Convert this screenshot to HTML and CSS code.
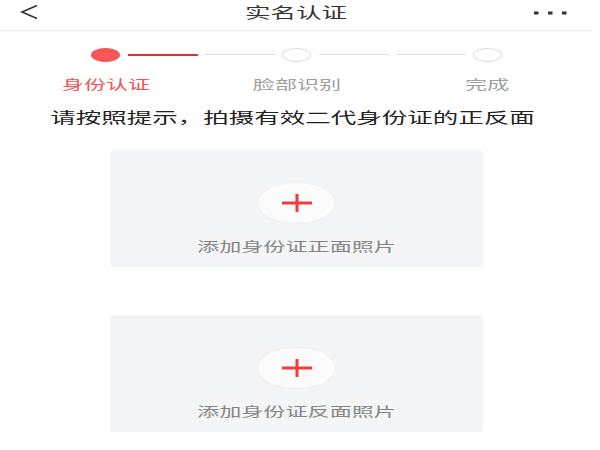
FILE: index.html
```html
<!DOCTYPE html>
<html lang="zh-CN">
<head>
<meta charset="utf-8">
<title>实名认证</title>
<link rel="stylesheet" href="styles.css">
</head>
<body>
<div class="page">
  <header class="topbar">
    <svg class="back" width="18" height="16" viewBox="0 0 18 16"><polyline points="17,1.5 2,8 17,14.5" fill="none" stroke="#333" stroke-width="1.6"/></svg>
    <h1 class="title"><span class="sx">实名认证</span></h1>
    <svg class="more" width="33" height="4" viewBox="0 0 33 4"><rect x="0" y="0.5" width="4.5" height="3" fill="#333"/><rect x="14" y="0.5" width="4.5" height="3" fill="#333"/><rect x="28" y="0.5" width="4.5" height="3" fill="#333"/></svg>
  </header>

  <div class="stepper">
    <div class="step active">
      <div class="dot"></div>
      <div class="step-label"><span class="sx">身份认证</span></div>
    </div>
    <div class="connector"><i class="seg red"></i><i class="seg"></i></div>
    <div class="step">
      <div class="dot"></div>
      <div class="step-label"><span class="sx">脸部识别</span></div>
    </div>
    <div class="connector"><i class="seg"></i><i class="seg"></i></div>
    <div class="step">
      <div class="dot"></div>
      <div class="step-label"><span class="sx">完成</span></div>
    </div>
  </div>

  <p class="hint"><span class="sx">请按照提示，拍摄有效二代身份证的正反面</span></p>

  <div class="card">
    <div class="add">
      <svg width="30" height="18" viewBox="0 0 30 18"><rect x="0" y="7.5" width="30" height="3" fill="#f23b3b"/><rect x="13.5" y="0" width="3" height="18" fill="#f23b3b"/></svg>
    </div>
    <div class="card-label"><span class="sx">添加身份证正面照片</span></div>
  </div>

  <div class="card">
    <div class="add">
      <svg width="30" height="18" viewBox="0 0 30 18"><rect x="0" y="7.5" width="30" height="3" fill="#f23b3b"/><rect x="13.5" y="0" width="3" height="18" fill="#f23b3b"/></svg>
    </div>
    <div class="card-label"><span class="sx">添加身份证反面照片</span></div>
  </div>
</div>
</body>
</html>
```

FILE: styles.css
```css
html, body {
  margin: 0;
  padding: 0;
  background: #fff;
}
body {
  font-family: "Noto Sans CJK SC", "Noto Sans", sans-serif;
}
.page {
  width: 593px;
}
.sx {
  display: inline-block;
  transform: scaleX(1.7);
  white-space: nowrap;
}

.topbar {
  height: 30px;
  border-bottom: 1px solid #ebebeb;
  display: grid;
  grid-template-columns: 1fr auto 1fr;
  align-items: center;
  padding: 0 26px 0 20px;
}
.back {
  display: block;
  margin-top: -6px;
}
.more {
  display: block;
  justify-self: end;
  margin-top: -5px;
}
.title {
  margin: -7px 0 0 0;
  padding-left: 5px;
  font-size: 15px;
  font-weight: 400;
  line-height: 21px;
  color: #333;
}

.stepper {
  display: flex;
  align-items: flex-start;
  padding: 17px 91px 0 91px;
}
.step {
  width: 29px;
  display: flex;
  flex-direction: column;
  align-items: center;
  flex: none;
}
.dot {
  width: 27px;
  height: 12px;
  border: 1px solid #dedede;
  border-radius: 50%;
  background: #fff;
}
.step.active .dot {
  background: #f65656;
  border-color: #f65656;
}
.step-label {
  margin-top: 13px;
  font-size: 13px;
  line-height: 17px;
  color: #a0a0a0;
  white-space: nowrap;
}
.step.active .step-label {
  color: #f25353;
}
.connector {
  flex: 1;
  display: flex;
  gap: 7px;
  margin: 6px 7px 0 8px;
}
.seg {
  flex: 1;
  height: 1px;
  background: #dcdcdc;
}
.seg.red {
  background: #ec2d2d;
  height: 1.5px;
}

.hint {
  margin: 14px 0 0 0;
  text-align: center;
  font-size: 15px;
  line-height: 21px;
  color: #222;
  padding-right: 7px;
}

.card {
  width: 373px;
  height: 117px;
  margin: 23px auto 0;
  background: #f4f5f7;
  border-radius: 3px;
  display: flex;
  flex-direction: column;
  align-items: center;
  padding-top: 33px;
  box-sizing: border-box;
}
.card + .card {
  margin-top: 48px;
}
.add {
  width: 77px;
  height: 40px;
  border-radius: 50%;
  background: #fbfbfb;
  box-shadow: 0 0 3px rgba(0, 0, 0, 0.05);
  display: flex;
  align-items: center;
  justify-content: center;
}
.add svg {
  display: block;
}
.card-label {
  margin-top: 14px;
  font-size: 13px;
  line-height: 17px;
  color: #858585;
}
```
